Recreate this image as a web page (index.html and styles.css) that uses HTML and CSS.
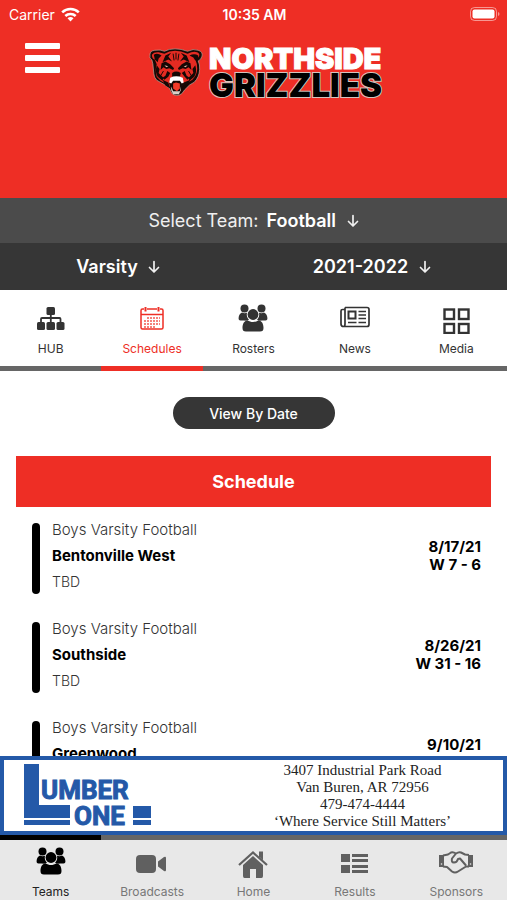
FILE: index.html
```html
<!DOCTYPE html>
<html lang="en">
<head>
  <meta charset="utf-8">
  <meta name="viewport" content="width=device-width, initial-scale=1">
  <title>Northside Grizzlies - Schedule</title>
  <link rel="stylesheet" href="styles.css">
</head>
<body>
  <!-- shared icons -->
  <svg class="sprite" aria-hidden="true">
    <symbol id="arrow" viewBox="0 0 12 14">
      <path d="M6 1.500v10M1.500 7.500L6 12l4.500-4.500" fill="none" stroke="currentColor" stroke-width="1.700" stroke-linecap="round" stroke-linejoin="round"/>
    </symbol>
    <symbol id="users" viewBox="0 0 30 28">
      <circle cx="6.500" cy="4.500" r="4"/>
      <circle cx="23.500" cy="4.500" r="4"/>
      <path d="M4 8.500c1.500 1 3.500 1 5 .3-.8 3 .3 5.200 2 7-2 .7-3.500 1-5 .8H2.500C1 16.500.5 15.500.6 14c.2-2.500 1-4.500 3.400-5.500z"/>
      <path d="M26 8.500c-1.500 1-3.500 1-5 .3.800 3-.3 5.200-2 7 2 .7 3.500 1 5 .8h3.500c1.500-.1 2-1.100 1.900-2.600-.2-2.500-1-4.500-3.400-5.500z"/>
      <circle cx="15" cy="10.500" r="5.400"/>
      <path d="M9.500 16.200c3.300 2.400 7.700 2.400 11 0 3.500.6 5 3.800 5 7.800 0 2.500-1 3.500-3.500 3.500H8c-2.500 0-3.500-1-3.500-3.500 0-4 1.500-7.200 5-7.800z"/>
    </symbol>
  </svg>

  <header class="header">
    <div class="status-bar">
      <div class="carrier">
        <span>Carrier</span>
        <svg class="wifi" viewBox="0 0 19 15">
          <g fill="none" stroke="#fff" stroke-width="2.600">
            <path d="M1.200 5.400a12 12 0 0 1 16.600 0"/>
            <path d="M4.300 9a7.600 7.600 0 0 1 10.400 0"/>
          </g>
          <path d="M9.500 14.500l-3-3.200a4.400 4.400 0 0 1 6 0z" fill="#fff"/>
        </svg>
      </div>
      <div class="clock">10:35 AM</div>
      <svg class="battery" viewBox="0 0 30 15">
        <rect x="0.500" y="0.500" width="26" height="13" rx="4" fill="none" stroke="#fff" stroke-opacity="0.500"/>
        <rect x="2.500" y="2.500" width="22" height="9" rx="2" fill="#fff"/>
        <path d="M28 5v4c2-.8 2-3.200 0-4z" fill="#fff" fill-opacity="0.500"/>
      </svg>
    </div>
    <div class="brand-row">
      <button class="menu-button" type="button" aria-label="Menu">
        <span></span><span></span><span></span>
      </button>
      <div class="brand">
        <svg class="bear" viewBox="0 0 56 50">
          <path d="M1 7q0-4 5-4.500 6-1 10 1Q21 1 27 1t13 2.500q6-3 11-1 5 1.500 4 6-1 4-4 5 2 4 1.500 9-.5 8-5.500 13l-5 3-5 5-3 4q-5 3.500-10 0l-3-6-6-4-7-4q-3-3-3-7l-1-10-1-4Q0 11 1 7z" fill="#160805" stroke="#b9a79c" stroke-width="0.700"/>
          <path d="M3 7q2-3 7-2.500l6 1.500q5-3 11-3t13 3q6-3 10-1.500 3 1.500 2 4-1 3-4 3.500 2.500 5 2 10-.5 7-5 11l-5 3-5 3-3 3h-9l-4-4-7-4-4-4q-2-7 0-13l-2-5q-3-1-3-5z" fill="#e42b22"/>
          <!-- ears -->
          <path d="M5 7q4-2 8 1l-3 3-1 4-3-3zM51 8q-4-3-9 0l4 2 2 3 3-2z" fill="#160805"/>
          <!-- brow and muzzle shading -->
          <g fill="#160805">
            <path d="M17 8l6-3-3 4 4 5-4-2-6 3zM39 8l-6-3 3 4-4 5 4-2 6 3z"/>
            <path d="M13 16l4-2 5 3 4 4-1 2-4-2-3 1-3-2-3 3zM43 16l-4-2-5 3-4 4 1 2 4-2 3 1 3-2 3 3z"/>
            <path d="M8 18l3 4-1 4 5 5-1 3-5-4q-3-5-1-12zM48 18l-3 4 1 4-5 5 1 3 5-4q3-5 1-12z"/>
            <path d="M19 24l3 2-2 4-4 3-2-2 3-2zM37 24l-3 2 3 4 3 3 2-2-3-2z"/>
            <path d="M24 26q4-3 9 0l-1 4-4 1-4-1z"/>
            <path d="M14 33l6 3 2 6-5-3zM43 33l-7 3-2 6 5-3z"/>
          </g>
          <path d="M16 18l4 1-2 1zM40 18l-4 1 2 1z" fill="#e8b5a8"/>
          <path d="M28 5v7M25 6l1 7M31 6l-1 7M15 24l-3 5M41 24l3 5" fill="none" stroke="#160805"/>
          <!-- open mouth -->
          <path d="M23 31h11l2 6-3 8-5 3-5-3-2-8z" fill="#160805"/>
          <path d="M22 31q6-3 13 0l1 5-2 1-2-3h-7l-2 3-2-1z" fill="#fff"/>
          <path d="M25 37l3-1 4 1v5l-3 3-4-3z" fill="#f13a28"/>
          <path d="M23 40l2 5h7l1-5v4l-2 4h-6l-2-4z" fill="#d8d0c8"/>
        </svg>
        <div class="brand-name">
          <span class="brand-top">NORTHSIDE</span>
          <span class="brand-bottom">GRIZZLIES</span>
        </div>
      </div>
    </div>
  </header>

  <div class="team-bar">
    <label for="team">Select Team:</label>
    <select id="team"><option>Football</option></select>
    <svg class="arrow"><use href="#arrow"/></svg>
  </div>
  <div class="filter-bar">
    <div class="filter">
      <select id="level" aria-label="Level"><option>Varsity</option></select>
      <svg class="arrow"><use href="#arrow"/></svg>
    </div>
    <div class="filter">
      <select id="season" aria-label="Season"><option>2021-2022</option></select>
      <svg class="arrow"><use href="#arrow"/></svg>
    </div>
  </div>

  <nav class="tabs">
    <a class="tab" href="#hub">
      <svg viewBox="0 0 30 30">
        <g fill="currentColor">
          <rect x="10.500" y="3" width="8.500" height="8" rx="1.500"/>
          <rect x="1" y="18" width="8" height="8" rx="1.500"/>
          <rect x="10.500" y="18" width="8.500" height="8" rx="1.500"/>
          <rect x="20.500" y="18" width="8" height="8" rx="1.500"/>
        </g>
        <path d="M14.800 10v9M5 19v-4q0-1 1-1h17.500q1 0 1 1v4" fill="none" stroke="currentColor" stroke-width="1.800"/>
      </svg>
      <span>HUB</span>
    </a>
    <a class="tab active" href="#schedules">
      <svg viewBox="0 0 30 30">
        <g fill="none" stroke="currentColor">
          <path d="M7 5H5.500Q4 5 4 6.500v17Q4 25 5.500 25h19q1.500 0 1.500-1.500v-17Q26 5 24.500 5H23M10 5h10" stroke-width="1.500"/>
          <path d="M4 10.500h22" stroke-width="1.500"/>
          <path d="M8.500 3v4.500M21.500 3v4.500" stroke-width="2"/>
          <path d="M10 14h13M7 17h16M7 20h16M7 23h11" stroke-width="1.500" stroke-dasharray="2 1" stroke-opacity="0.800"/>
        </g>
      </svg>
      <span>Schedules</span>
    </a>
    <a class="tab" href="#rosters">
      <svg viewBox="0 0 30 30" fill="currentColor"><use href="#users" width="30" height="28"/></svg>
      <span>Rosters</span>
    </a>
    <a class="tab" href="#news">
      <svg viewBox="0 0 30 30">
        <g fill="none" stroke="currentColor" stroke-width="1.700">
          <path d="M5 3.500h22q2 0 2 2v15q0 2-2 2H3.500Q1 22.500 1 20V7q0-1.500 1.500-1.500H5M5 3.500V20q0 2.500-1.500 2.500"/>
          <rect x="8.500" y="7.500" width="7" height="7" stroke-width="2"/>
          <path d="M18.500 7.500H26M18.500 11H26M18.500 14.500H26M8 18.500h8.500M18.500 18.500H26" stroke-width="1.500"/>
        </g>
      </svg>
      <span>News</span>
    </a>
    <a class="tab" href="#media">
      <svg viewBox="0 0 30 30">
        <g fill="none" stroke="currentColor" stroke-width="2.400">
          <rect x="3.500" y="5.500" width="9.500" height="9.500"/>
          <rect x="18" y="5.500" width="9.500" height="9.500"/>
          <rect x="3.500" y="20" width="9.500" height="9"/>
          <rect x="18" y="20" width="9.500" height="9"/>
        </g>
      </svg>
      <span>Media</span>
    </a>
  </nav>

  <main class="content">
    <button class="view-button" type="button">View By Date</button>
    <h1 class="schedule-title">Schedule</h1>
    <ul class="games">
      <li class="game">
        <div class="game-info">
          <p>Boys Varsity Football</p>
          <h2>Bentonville West</h2>
          <p class="time">TBD</p>
        </div>
        <div class="game-result">8/17/21<br>W 7 - 6</div>
      </li>
      <li class="game">
        <div class="game-info">
          <p>Boys Varsity Football</p>
          <h2>Southside</h2>
          <p class="time">TBD</p>
        </div>
        <div class="game-result">8/26/21<br>W 31 - 16</div>
      </li>
      <li class="game">
        <div class="game-info">
          <p>Boys Varsity Football</p>
          <h2>Greenwood</h2>
          <p class="time">TBD</p>
        </div>
        <div class="game-result">9/10/21<br>TBD</div>
      </li>
    </ul>
  </main>

  <aside class="sponsor">
    <svg class="lumber-logo" viewBox="0 0 130 64">
      <path d="M0 0h15v41h31v13H0zM0 56h46v5H0zM109 42h18v12h-18zM109 56h18v5h-18z"/>
      <text x="17" y="35">UMBER</text>
      <text x="50" y="61">ONE</text>
    </svg>
    <address>3407 Industrial Park Road<br>Van Buren, AR 72956<br>479-474-4444<br>‘Where Service Still Matters’</address>
  </aside>

  <nav class="bottom-nav">
    <a class="nav-item active" href="#teams">
      <svg viewBox="0 0 36 30" fill="currentColor"><use href="#users" x="3" y="1" width="30" height="28"/></svg>
      <span>Teams</span>
    </a>
    <a class="nav-item" href="#broadcasts">
      <svg viewBox="0 0 36 30" fill="currentColor">
        <rect x="2" y="9" width="20" height="18" rx="4"/>
        <path d="M24 15.500l6-4.500q2-1 2 1v12q0 2-2 1l-6-4.500z"/>
      </svg>
      <span>Broadcasts</span>
    </a>
    <a class="nav-item" href="#home">
      <svg viewBox="0 0 36 30">
        <path d="M8 19l10-9 10 9v11q0 2-1.500 2H21v-9h-6v9H9.500Q8 32 8 30z" fill="currentColor"/>
        <path d="M4 19L18 6.500 32 19" fill="none" stroke="currentColor" stroke-width="2.200"/>
        <path d="M24 5.500h4v9l-4-4z" fill="currentColor"/>
      </svg>
      <span>Home</span>
    </a>
    <a class="nav-item" href="#results">
      <svg viewBox="0 0 36 30" fill="currentColor">
        <path d="M4 8h9v8H4zM4 19h9v8H4zM15 8h16v3H15zM15 13h16v3H15zM15 19h16v3H15zM15 24h16v3H15z"/>
      </svg>
      <span>Results</span>
    </a>
    <a class="nav-item" href="#sponsors">
      <svg viewBox="0 0 36 30">
        <path d="M1 9h5v12H1zM30 9h5v12h-5z" fill="currentColor"/>
        <path d="M5 9.500l5-1 3-2q2-1 5 1 3-2 5-1l4 2 4 .5M5 20.500l4 .5 5 4.500q3 2 6 0l8-5h3M18 7.500l-4 5q-1 4 2 4 3 0 4-3.500l2-.5 6 7" fill="none" stroke="currentColor" stroke-width="2" stroke-linejoin="round"/>
        <circle cx="3.500" cy="18" r="0.800" fill="#e8e8e8"/>
        <circle cx="32.500" cy="18" r="0.800" fill="#e8e8e8"/>
      </svg>
      <span>Sponsors</span>
    </a>
  </nav>
</body>
</html>
```

FILE: styles.css
```css
* {
  box-sizing: border-box;
}
::-webkit-scrollbar {
  display: none;
}
body {
  margin: 0;
  height: 100vh;
  display: flex;
  flex-direction: column;
  font-family: Inter, sans-serif;
  color: #000;
  background: #fff;
}
a {
  text-decoration: none;
}
.sprite {
  display: none;
}

/* Header */
.header {
  background: #ee2e25;
  color: #fff;
  padding-bottom: 98px;
}
.status-bar {
  display: grid;
  grid-template-columns: 1fr auto 1fr;
  align-items: center;
  height: 28px;
  padding: 0 7px 0 9px;
  font-size: 14px;
}
.carrier {
  display: flex;
  align-items: center;
  gap: 6px;
}
.wifi {
  width: 19px;
  height: 15px;
}
.clock {
  font-weight: 600;
}
.battery {
  width: 30px;
  height: 15px;
  justify-self: end;
}
.brand-row {
  display: grid;
  grid-template-columns: 1fr auto 1fr;
  padding: 15px 25px 0;
  height: 72px;
}
.menu-button {
  display: flex;
  flex-direction: column;
  gap: 6px;
  width: 35px;
  height: 30px;
  padding: 0;
  border: none;
  background: none;
  cursor: pointer;
}
.menu-button span {
  height: 6px;
  width: 100%;
  border-radius: 1px;
  background: #fff;
}
.brand {
  display: flex;
  align-items: center;
  gap: 6px;
  padding-left: 24px;
}
.bear {
  width: 54px;
  height: 50px;
}
.brand-name {
  display: flex;
  flex-direction: column;
  font-weight: 900;
  line-height: 26px;
}
.brand-top {
  font-size: 29px;
  -webkit-text-stroke: 1px #fff;
}
.brand-bottom {
  font-size: 33px;
  color: #000;
  -webkit-text-stroke: 2px #d5c4bd;
  paint-order: stroke fill;
}

/* Team, level and season pickers */
select {
  appearance: none;
  padding: 0;
  border: none;
  background: none;
  color: #fff;
  font: inherit;
  font-weight: 600;
}
.team-bar, .filter {
  display: flex;
  align-items: center;
  justify-content: center;
  font-size: 18px;
  color: #f0f0f0;
}
.team-bar {
  height: 45px;
  background: #4b4b4b;
}
.team-bar label {
  margin-right: 8px;
}
.filter-bar {
  display: flex;
  height: 47px;
  background: #363636;
}
.filter {
  flex: 1 1 auto;
}
.arrow {
  width: 12px;
  height: 14px;
  margin-left: 10px;
}

/* Section tabs */
.tabs, .bottom-nav {
  display: grid;
  grid-template-columns: repeat(5, 1fr);
}
.tab, .nav-item {
  display: flex;
  flex-direction: column;
  align-items: center;
}
.tab {
  padding: 14px 0 9px;
  border-bottom: 5px solid #666;
  color: #333;
  font-size: 12px;
  line-height: 16px;
}
.tab svg {
  width: 30px;
  height: 30px;
  margin-bottom: 7px;
}
.tab.active {
  color: #ee2e25;
  border-color: #ee2e25;
}

/* Schedule */
.content {
  flex: 1;
  min-height: 0;
  overflow-y: auto;
  padding: 26px 16px 0;
}
.view-button {
  display: block;
  width: 162px;
  height: 32px;
  margin: 0 auto 27px;
  border: none;
  border-radius: 16px;
  background: #363636;
  color: #fff;
  font: 500 14px Inter, sans-serif;
  cursor: pointer;
}
.schedule-title {
  margin: 0;
  background: #ee2e25;
  color: #fff;
  font-size: 18px;
  font-weight: 700;
  line-height: 51px;
  text-align: center;
}
.games {
  list-style: none;
  margin: 0;
  padding: 16px 10px 0 16px;
}
.game {
  display: flex;
  align-items: center;
  justify-content: space-between;
  margin-bottom: 28px;
}
.game::before {
  content: "";
  align-self: stretch;
  width: 8px;
  margin-right: 12px;
  border-radius: 4px;
  background: #000;
}
.game-info {
  flex: 1;
  height: 71px;
  padding-bottom: 6px;
  display: flex;
  flex-direction: column;
  justify-content: center;
}
.game-info p, .game-info h2 {
  margin: 0;
  font-size: 15px;
  line-height: 26px;
}
.game-info p {
  color: #333;
  font-weight: 300;
}
.game-info .time {
  font-size: 14px;
}
.game-info h2 {
  font-weight: 700;
}
.game-result {
  padding-bottom: 6px;
  font-size: 15px;
  font-weight: 700;
  line-height: 18px;
  text-align: right;
}

/* Sponsor banner */
.sponsor {
  display: flex;
  justify-content: space-between;
  align-items: center;
  padding: 0 52px 0 20px;
  border: 4px solid #2459a8;
  background: #fff;
}
.lumber-logo {
  width: 130px;
  height: 64px;
  fill: #2459a8;
}
.lumber-logo text {
  font: bold 26px Roboto, sans-serif;
  stroke: #2459a8;
  stroke-width: 1px;
}
.sponsor address {
  padding: 2px 0 1px;
  color: #222;
  font: normal 15px "Liberation Serif", serif;
  line-height: 17px;
  text-align: center;
}

/* Bottom navigation */
.bottom-nav {
  background: #e8e8e8;
}
.nav-item {
  height: 65px;
  padding-top: 6px;
  border-top: 5px solid #666;
  color: #777;
  font-size: 12px;
  line-height: 16px;
}
.nav-item svg {
  width: 36px;
  height: 30px;
  margin-bottom: 8px;
  color: #606060;
  overflow: visible;
}
.nav-item.active {
  border-color: #000;
  color: #222;
}
.nav-item.active svg {
  color: #000;
}
```
